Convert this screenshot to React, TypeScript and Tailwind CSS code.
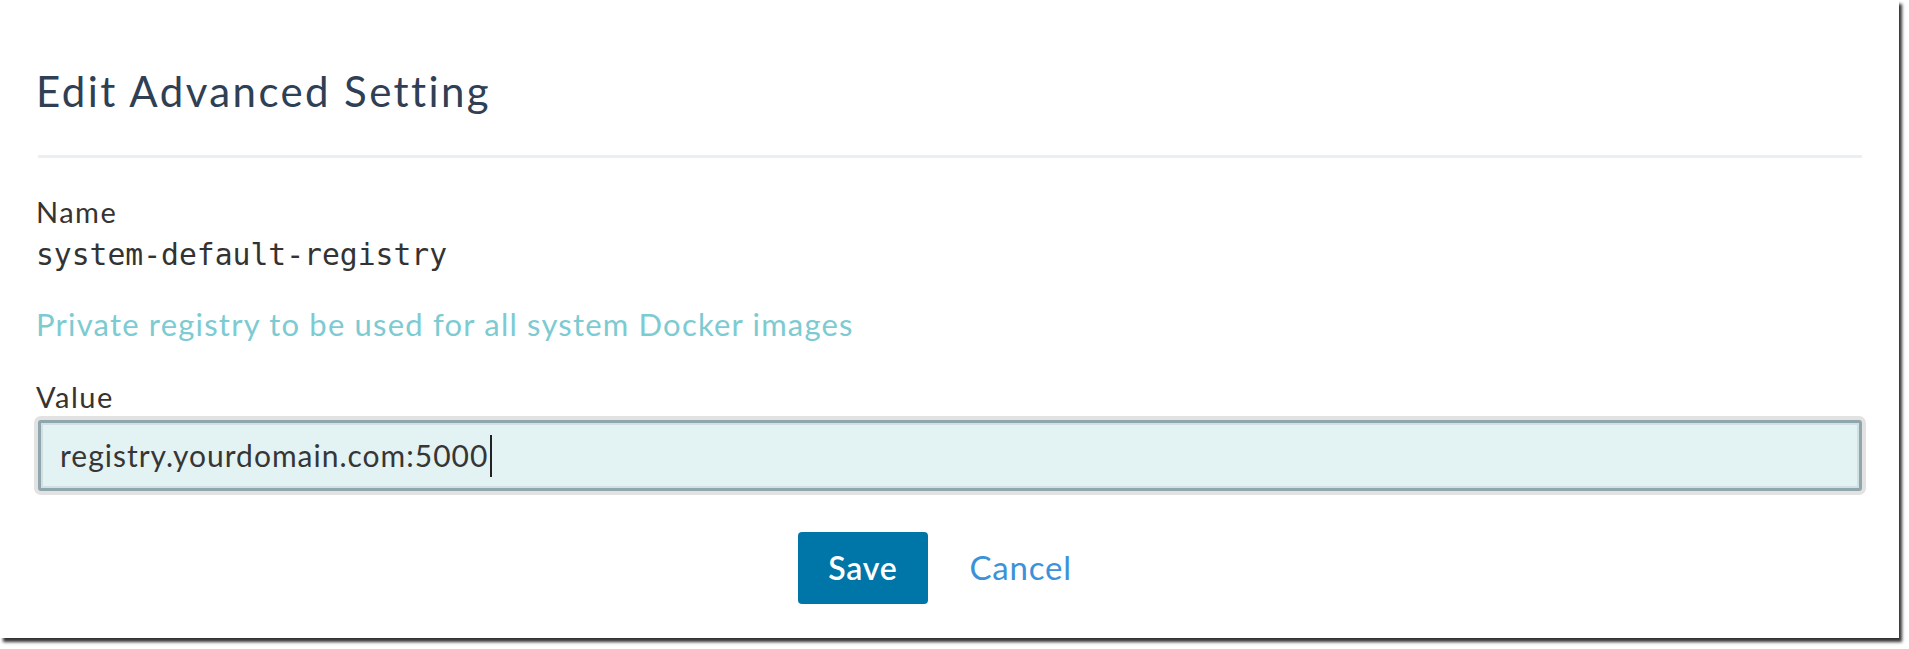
import React, { type FC } from "react";

/**
 * Edit Advanced Setting dialog (captured as a window with a drop shadow)
 */
const App: FC = () => {
  return (
    <div className="h-[649px] w-[1909px] bg-white">
      <div className="h-[638px] w-[1899px] bg-white shadow-[3px_4px_3px_rgba(0,0,0,0.8)] pl-[36px] pr-[37px] font-['Lato',sans-serif]">
        <h2 className="pt-[67px] text-[42px] leading-[48px] font-normal tracking-[2.4px] text-[#2f4054]">
          Edit Advanced Setting
        </h2>
        <div className="mt-[40px] ml-[2px] h-[3px] bg-[#eceff1]" />

        <div className="mt-[39px] text-[29px] leading-[29px] tracking-[1.5px] text-[#363330]">Name</div>
        <div className="mt-[11px] font-['DejaVu_Sans_Mono',monospace] text-[29.7px] leading-[36px] text-[#333]">
          system-default-registry
        </div>

        <p className="mt-[35px] text-[31px] leading-[32px] tracking-[1.2px] text-[#7ccbd2]">
          Private registry to be used for all system Docker images
        </p>

        <div className="mt-[42px] text-[29px] leading-[29px] tracking-[1.5px] text-[#363330]">Value</div>
        <div className="mt-[9px] ml-[2px] h-[71px] rounded-[3px] border-[3px] border-[#8ea6ac] bg-[#e3f2f3] shadow-[0_0_0_4px_#e2e2e2,inset_0_0_0_2px_#d2e0e2] flex items-center px-[19px]">
          <span className="text-[30px] tracking-[1px] text-[#363636]">registry.yourdomain.com:5000</span>
          <span className="ml-[2px] h-[42px] w-[2px] bg-[#222]" />
        </div>

        <div className="mt-[41px] ml-[2px] flex justify-center gap-[12px]">
          <button
            type="button"
            className="h-[72px] rounded-[4px] bg-[#0075a8] px-[30px] text-[32px] font-semibold tracking-[0.8px] text-white"
          >
            Save
          </button>
          <button
            type="button"
            className="h-[72px] rounded-[4px] px-[30px] text-[33px] tracking-[0.8px] text-[#3d91d8]"
          >
            Cancel
          </button>
        </div>
      </div>
    </div>
  );
};

export default App;
